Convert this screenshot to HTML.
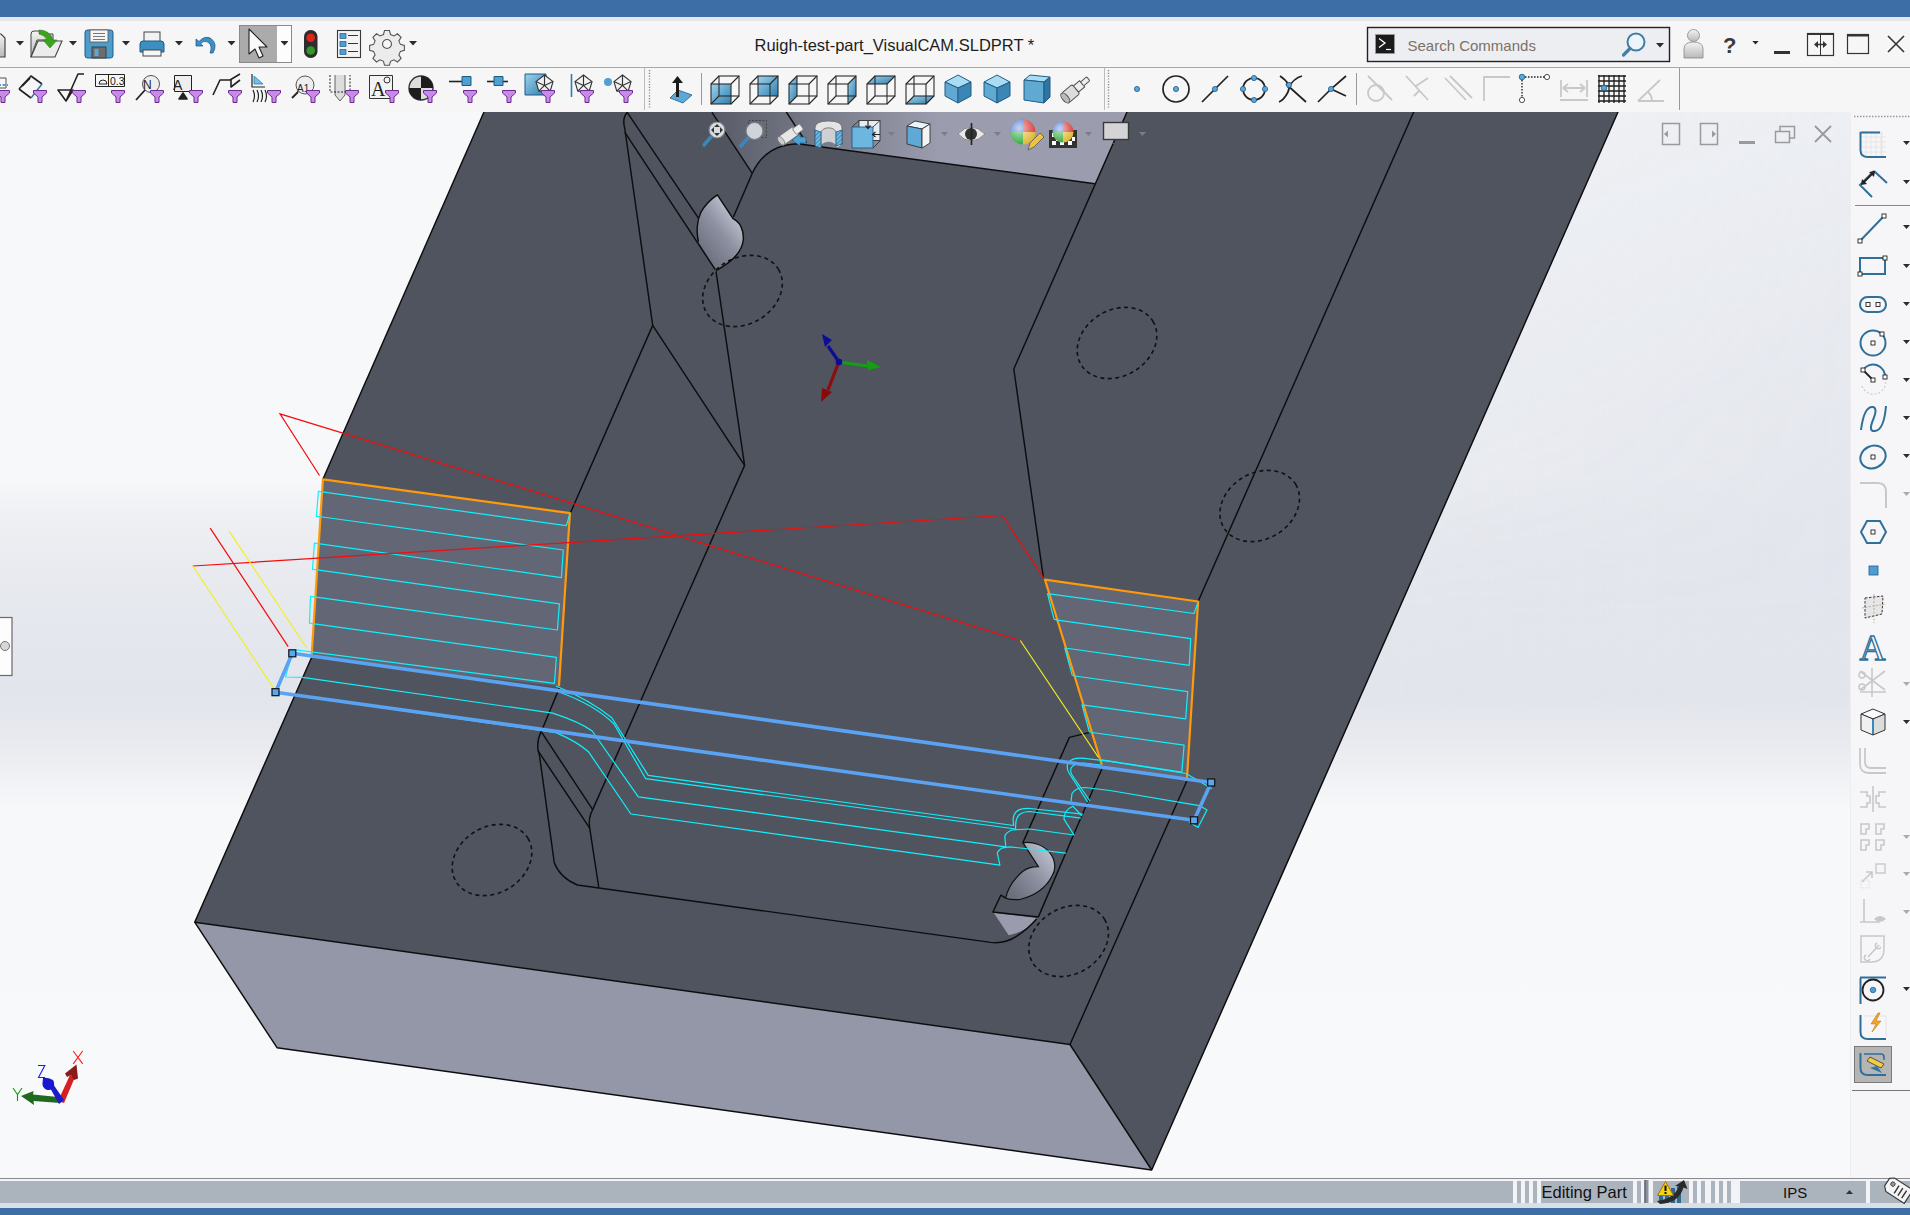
<!DOCTYPE html>
<html><head><meta charset="utf-8">
<style>
html,body{margin:0;padding:0;width:1910px;height:1215px;overflow:hidden;background:#f4f5f7;font-family:"Liberation Sans",sans-serif;}
#title{position:absolute;left:0;top:0;width:1910px;height:17px;background:#3d6ea6;}
#tb{position:absolute;left:0;top:17px;width:1910px;height:95px;background:#f6f6f7;}
#tbstrip{position:absolute;left:0;top:17px;width:1910px;height:4px;background:#e4e7ed;}
#sep1{position:absolute;left:0;top:67px;width:1910px;height:1px;background:#a9a9ab;}
#vp{position:absolute;left:0;top:112px;width:1850px;height:1066px;overflow:hidden;
 background:linear-gradient(180deg,#f7f8fa 0px,#f7f8fa 365px,#eef0f3 405px,#e9ebf0 450px,#e4e7ed 520px,#e2e5ec 580px,#e7e9ee 625px,#f0f1f4 665px,#f7f8fa 695px,#f8f9fa 1066px);}
#vp2{position:absolute;left:1000px;top:112px;width:850px;height:600px;
 background:linear-gradient(90deg,rgba(226,229,236,0) 0%,rgba(226,229,236,0.75) 55%,rgba(226,229,236,1) 100%);
 -webkit-mask-image:linear-gradient(180deg,rgba(0,0,0,0.5) 0%,rgba(0,0,0,0.85) 50%,rgba(0,0,0,1) 85%,rgba(0,0,0,0) 100%);}
#tp{position:absolute;left:1850px;top:112px;width:60px;height:1066px;background:#f6f6f8;border-left:1px solid #eeeef1;box-sizing:border-box;}
#sbline{position:absolute;left:0;top:1178px;width:1910px;height:1px;background:#8c8c8e;}
#sb{position:absolute;left:0;top:1179px;width:1910px;height:29px;background:#f1f3f6;}
#bot{position:absolute;left:0;top:1208px;width:1910px;height:7px;background:#3d6ea6;}
svg{position:absolute;left:0;top:0;}
.t{position:absolute;white-space:nowrap;color:#1a1a1a;}
</style></head><body>
<div id="title"></div>
<div id="tb"></div>
<div id="tbstrip"></div>
<div id="sep1"></div>
<div id="vp"></div><div id="vp2"></div>
<div id="tp"></div>
<div id="sbline"></div>
<div id="sb"></div>
<div id="bot"></div>

<!-- MODEL -->
<svg width="1910" height="1215" viewBox="0 0 1910 1215" style="clip-path:inset(112px 60px 37px 0)">
<defs>
<linearGradient id="wall" x1="712" y1="0" x2="940" y2="0" gradientUnits="userSpaceOnUse">
<stop offset="0" stop-color="#585b67"/><stop offset="1" stop-color="#9b9dae"/></linearGradient>
<linearGradient id="tear1" x1="700" y1="252" x2="738" y2="222" gradientUnits="userSpaceOnUse"><stop offset="0" stop-color="#6c6f7d"/><stop offset="0.6" stop-color="#8e91a1"/><stop offset="1" stop-color="#b6b9c7"/></linearGradient>
<linearGradient id="tear2" x1="1012" y1="893" x2="1052" y2="858" gradientUnits="userSpaceOnUse"><stop offset="0" stop-color="#6c6f7d"/><stop offset="0.55" stop-color="#8e91a1"/><stop offset="1" stop-color="#b6b9c7"/></linearGradient>
<linearGradient id="tear" x1="0" y1="0" x2="1" y2="0.3">
<stop offset="0" stop-color="#7a7d8c"/><stop offset="0.6" stop-color="#a5a7b6"/><stop offset="1" stop-color="#6d707e"/></linearGradient>
</defs>
<!-- body top -->
<polygon points="484,112 1618,112 1151.7,1170 1070,1044.5 194.7,922.2 311.5,657.7 322.9,479.3" fill="#50545f"/>
<!-- front face -->
<polygon points="194.7,922.2 1070,1044.5 1151.7,1170 277,1047.7" fill="#9497a8"/>
<!-- far wall -->
<path d="M712,112 L752.3,173.3 Q765,145 797.6,143.7 L1094.9,183.7 L1127,112 Z" fill="url(#wall)"/>
<!-- selected faces -->
<polygon points="322.9,479.3 569.9,513.1 559,686 311.5,657.7" fill="#636675"/>
<polygon points="1045,579.7 1198.1,601.5 1186.8,781 1101.8,764.7" fill="#636675"/>
<!-- teardrop top -->
<path d="M717.4,194.8 L733,218.7 C740,222 744,230 743.3,240 C742,252 732,262 716.2,270.5 L698.5,241.7 C696,232 697,220 701,212 C705,205 711,199 717.4,194.8 Z" fill="url(#tear1)"/>
<!-- crescent bottom right -->
<path d="M1023,842.8 C1032,841 1044,845 1050,853 C1056,861 1056,870 1052,876 C1046,888 1034,896 1020,899.5 C1014,900 1009,899.5 1005.8,898.2 C1007,890 1013,880 1022.5,871.5 C1027,868 1033,866.5 1038.4,866.6 Z" fill="url(#tear2)" stroke="#111" stroke-width="1.2"/>
<path d="M993.9,913 L1036.4,918 C1032,925 1024,932 1008.7,935.2 Z" fill="#9a9cad"/>
<g fill="none" stroke="#0d0d0f" stroke-width="1.45" stroke-linejoin="round">
<polyline points="484,112 322.9,479.3"/>
<polyline points="311.5,657.7 194.7,922.2 277,1047.7 1151.7,1170 1618,112"/>
<polyline points="194.7,922.2 1070,1044.5 1186.8,781"/>
<polyline points="1151.7,1170 1070,1044.5"/>
<!-- left channel -->
<path d="M627.2,112.4 Q622,118 624.7,128 L652.7,325.4 L570,513.8"/>
<polyline points="627.2,112.4 698.8,218.6"/>
<polyline points="624.7,132.2 715.3,269.7"/>
<polyline points="712,112.4 752.3,173.3"/>
<polyline points="786.3,112 806.4,142.7"/>
<path d="M752.3,173.3 Q765,145 797.6,143.7 L1094.9,183.7"/>
<polyline points="752.3,173.3 733.4,217"/>
<polyline points="716,271.3 744.6,465.4 592.7,809.6"/>
<polyline points="652.7,325.4 744.6,465.4"/>
<path d="M559.3,688.1 L541.2,731.7 Q537,740 537.9,749 L539.5,755.6 L554.3,862.8 Q560,878 577.4,885 L990.7,942.4 Q1005,944 1016.4,936.4 Q1028,929 1036.5,919"/>
<polyline points="541.2,731.7 592.7,809.6"/>
<polyline points="537.9,750.7 589.7,828.1"/>
<path d="M592.7,809.6 Q588,818 589.7,828.1 L598.8,887.5"/>
<!-- teardrop outline -->
<path d="M716.2,270.5 C732,262 742,252 743.3,240 C744,230 740,222 733,218.7 L717.4,194.8 C711,199 705,205 701,212 C697,220 696,232 698.5,241.7"/>
<!-- right side -->
<polyline points="1127,112 1013.8,369 1043.4,577.9"/>
<polyline points="1413.7,112 1198.1,601.5"/>
<polyline points="1101.8,769 1038.4,916.9"/>
<polyline points="1089.8,732.4 1069.4,737.4 1022.8,842.9"/>
<path d="M1005.8,898.2 L1000.8,895.2 L992.9,912 L1038.4,917"/>
</g>
<!-- dotted ellipses -->
<g fill="none" stroke="#111" stroke-width="1.6" stroke-dasharray="4 3.5">
<ellipse cx="742.5" cy="291" rx="42" ry="33" transform="rotate(-31 742.5 291)"/>
<ellipse cx="1117" cy="343" rx="42" ry="33" transform="rotate(-31 1117 343)"/>
<ellipse cx="1259.7" cy="506" rx="42" ry="33" transform="rotate(-31 1259.7 506)"/>
<ellipse cx="492" cy="860" rx="42" ry="33" transform="rotate(-31 492 860)"/>
<ellipse cx="1068.6" cy="941" rx="42" ry="33" transform="rotate(-31 1068.6 941)"/>
</g>
<!-- orange outlines -->
<g fill="none" stroke="#ff9a0a" stroke-width="2.2" stroke-linejoin="round">
<polyline points="311.5,657.7 322.9,479.3 569.9,513.1 559,686"/>
<polyline points="1101.8,764.7 1045,579.7 1198.1,601.5 1186.8,781"/>
</g>
<!-- cyan toolpaths -->
<g fill="none" stroke="#10f0fc" stroke-width="1.2" stroke-linejoin="round">
<polyline points="569.9,513.9 566.3,525.7 318.4,491.3 316.4,516.4 322.3,517 563.3,550 561.4,577.7 314.4,543.1 312.5,569.4 317.4,569.8 559.4,603.9 557.4,630 310.5,596.4 309.5,623.1 312.5,623.7 556.4,657.3 554.4,683.3 295.7,649.8"/>
<polyline points="1198,602.5 1194,613.5 1047.5,593.7 1054,619.2 1057.4,620.1 1190.7,638.7 1189.3,665.3 1064.8,648 1072.2,675.2 1074.6,676 1187.7,691.7 1185.7,718.8 1082,704.8 1089.4,732 1091.9,732.5 1184.1,745.2 1181.8,772.2 1101.2,759.8"/>
<path d="M556,686 Q590,700 612,718 L648.2,775.4 L1013.7,825.5 Q1012,816 1016,812 Q1020,808 1030,808.5 L1082.8,814.2"/>
<path d="M559,692 Q595,705 614,724 L645.7,778.7 L1015.7,829 Q1015,819 1019,815 Q1023,811.5 1030,811.5 L1080.9,818.1"/>
<path d="M291,657.6 L285.4,677 L302.6,677.4 L552.7,713.1 Q580,722 592.2,731 L638.3,796.8 L1005.8,846.8 L1004.8,836.9 Q1005,833 1011.7,830 L1029.5,829 L1074,835 L1064,819.1 Q1064,810 1073,806.3 L1082,816"/>
<path d="M285.8,694 L556,732.6 Q578,742 588.9,752.3 L630.9,814 L999.9,865.1 L997.4,853.7 Q997,851 1002.8,847.8 L1009.8,846.8 L1066,853.2"/>
<path d="M1110,761.4 L1084.8,758.4 Q1072,757 1068,763 Q1066,768 1069,773 L1087.8,802.3"/>
<path d="M1101,765 L1084,763 Q1074,763 1071,768 Q1070,772 1072,775 L1090,801"/>
<path d="M1110,790.5 L1084.8,787.5 Q1076,787.5 1072,793.5 L1071,801.4"/>
<path d="M1212.1,788.7 L1186,773.5 L1110,761.4 M1199.2,805.6 L1110,790.5"/>
<path d="M1199.2,805.6 L1207,810 L1198,827.5 L1189,822"/>
</g>
<!-- red / yellow -->
<g fill="none" stroke-width="1.2">
<polyline points="319.5,475.5 280,413.9 1020.3,640.5" stroke="#f40c0c"/>
<polyline points="192.8,566 1002.5,515.5 1043.7,578.2" stroke="#f40c0c"/>
<polyline points="210.2,528.1 288.2,646.6" stroke="#f40c0c"/>
<polyline points="192.8,566 273.4,687.8" stroke="#f0f020"/>
<polyline points="229,530.8 306.7,648" stroke="#f0f020"/>
<polyline points="1020.3,640.5 1098.5,757.5" stroke="#f0f020"/>
</g>
<!-- blue sketch -->
<g fill="none" stroke="#5aa2f2" stroke-width="3.6" stroke-linejoin="round">
<polygon points="292.3,653.3 1211.2,782.5 1194,820.3 275.5,692.2"/>
</g>
<g fill="#5aa8f0" stroke="#111" stroke-width="1.2">
<rect x="288.8" y="649.8" width="7" height="7"/>
<rect x="272" y="688.7" width="7" height="7"/>
<rect x="1207.7" y="779" width="7" height="7"/>
<rect x="1190.5" y="816.8" width="7" height="7"/>
</g>
<!-- triad center -->
<g stroke-width="3.2" stroke-linecap="butt">
<line x1="839" y1="362" x2="828" y2="346" stroke="#0c0c98"/>
<line x1="839" y1="362" x2="868" y2="366" stroke="#12a012"/>
<line x1="838" y1="364" x2="828" y2="390" stroke="#8e0c0c"/>
</g>
<polygon points="822,334 832,340 825,347" fill="#0c0c98"/>
<polygon points="881,367 867,360 868,370" fill="#12a012"/>
<polygon points="821,402 822,388 832,392" fill="#8a0a0a"/>
<circle cx="839" cy="362" r="3.3" fill="#0c0c98"/>
</svg>


<!-- UI ICONS -->
<svg width="1910" height="1215" viewBox="0 0 1910 1215">
<defs>
<linearGradient id="blueg" x1="0" y1="0" x2="1" y2="1"><stop offset="0" stop-color="#9fd3ef"/><stop offset="1" stop-color="#2f7fae"/></linearGradient>
<linearGradient id="greyg" x1="0" y1="0" x2="0" y2="1"><stop offset="0" stop-color="#f4f4f4"/><stop offset="1" stop-color="#b8b8b8"/></linearGradient>
<radialGradient id="ballg" cx="0.35" cy="0.35" r="0.7"><stop offset="0" stop-color="#fff" stop-opacity="0.7"/><stop offset="1" stop-color="#fff" stop-opacity="0"/></radialGradient>
<symbol id="dd" viewBox="0 0 8 5"><polygon points="0,0 8,0 4,4.5" fill="#2b2b2b"/></symbol><symbol id="ddg" viewBox="0 0 8 5"><polygon points="0,0 8,0 4,4.5" fill="#aaa"/></symbol>
<symbol id="fun" viewBox="0 0 14 13"><path d="M0.5,0.5 H13.5 V3 L9,7 V12.5 H5 V7 L0.5,3 Z" fill="#c78ae6" stroke="#6b2a90" stroke-width="1"/></symbol>
<symbol id="mesh" viewBox="0 0 20 20"><g fill="#f2f2f2" stroke="#333" stroke-width="1.2" stroke-linejoin="round"><polygon points="10,1 19,8 16,18 4,18 1,8"/><polyline points="1,8 10,12 19,8" fill="none"/><polyline points="10,1 10,12 4,18" fill="none"/><polyline points="10,12 16,18" fill="none"/></g></symbol>
</defs>

<!-- row1 -->
<path d="M-8,34 H1 L5,38 V57 H-8Z" fill="url(#greyg)" stroke="#444" stroke-width="1.2"/>
<use href="#dd" x="16" y="41" width="8" height="5"/>
<g>
<path d="M31,57 V34 Q31,31 34,31 H41 L44,34 H53 V40 H37 Z" fill="url(#greyg)" stroke="#444" stroke-width="1"/>
<path d="M31,57 L38,41 H62 L55,57 Z" fill="#ececec" stroke="#444" stroke-width="1.1"/>
<path d="M39,30 Q50,30 53,40 L57,40 L50,48 L43,40 L47,40 Q45,35 39,34 Z" fill="#3da21e" stroke="#2b7a12" stroke-width="0.6"/>
</g>
<use href="#dd" x="69" y="41" width="8" height="5"/>
<g>
<rect x="85" y="30" width="28" height="28" rx="2.5" fill="#4f9bc9" stroke="#1f5c85" stroke-width="1"/>
<rect x="90" y="30" width="18" height="12" fill="#f5f5f5" stroke="#555" stroke-width="0.8"/>
<line x1="93" y1="33.5" x2="105" y2="33.5" stroke="#777"/><line x1="93" y1="36.5" x2="105" y2="36.5" stroke="#777"/><line x1="93" y1="39.5" x2="105" y2="39.5" stroke="#777"/>
<rect x="92" y="47" width="14" height="11" fill="#6d6d6d" stroke="#333" stroke-width="0.8"/>
<rect x="94.5" y="49" width="4" height="7" fill="#5aa9d6"/>
</g>
<use href="#dd" x="122" y="41" width="8" height="5"/>
<g>
<rect x="144" y="32" width="16" height="12" fill="#f2f2f2" stroke="#444" stroke-width="1"/>
<path d="M140,44 Q140,41 143,41 H161 Q164,41 164,44 V52 H140Z" fill="#3d8fc2" stroke="#1f5c85" stroke-width="1"/>
<rect x="143" y="50" width="18" height="6" fill="#f6f6f6" stroke="#444" stroke-width="1"/>
</g>
<use href="#dd" x="175" y="41" width="8" height="5"/>
<path d="M196,39 L196,46 L203,46 L200.5,43.5 Q204,40 208,42 Q213,46 210,53 L213,53 Q218,44 211,38.5 Q205,35 199,41.5 Z" fill="#3e8ec4" stroke="#1f5f8a" stroke-width="0.8"/>
<use href="#dd" x="227.5" y="41" width="8" height="5"/>
<rect x="239.5" y="25.5" width="52" height="37" fill="#fdfdfd" stroke="#8a8a8a" stroke-width="1"/>
<rect x="240" y="26" width="37" height="36" fill="#ababab"/>
<path d="M249,29 L267,47 L259,47 L263,56 L259,58 L255,49 L249,54 Z" fill="#fafafa" stroke="#222" stroke-width="1.1" stroke-linejoin="round"/>
<use href="#dd" x="280.5" y="41" width="8" height="5"/>
<rect x="304" y="30" width="13.5" height="28" rx="6.5" fill="#2d2d2d"/>
<circle cx="310.7" cy="37.8" r="4.3" fill="#e0261a"/><circle cx="310.7" cy="50.5" r="4.3" fill="#2f9a2a"/>
<g>
<rect x="337.5" y="30.5" width="23" height="27" fill="#f4f4f4" stroke="#3a3a3a" stroke-width="1.1"/>
<rect x="340" y="33.5" width="6" height="5" fill="#4d9fd2" stroke="#1f5c85" stroke-width="0.7"/>
<rect x="340" y="41.5" width="6" height="5" fill="#4d9fd2" stroke="#1f5c85" stroke-width="0.7"/>
<rect x="340" y="49.5" width="6" height="5" fill="#4d9fd2" stroke="#1f5c85" stroke-width="0.7"/>
<line x1="348" y1="35.5" x2="358" y2="35.5" stroke="#333" stroke-width="1"/><line x1="348" y1="43.5" x2="358" y2="43.5" stroke="#333" stroke-width="1"/><line x1="348" y1="51.5" x2="358" y2="51.5" stroke="#333" stroke-width="1"/>
</g>
<g transform="translate(387,44)">
<path d="M-2.5,-13.5 h5 l1,4 l3.5,1.5 l3.5,-2.2 l3.6,3.6 l-2.2,3.5 l1.5,3.5 l4,1 v5 l-4,1 l-1.5,3.5 l2.2,3.5 l-3.6,3.6 l-3.5,-2.2 l-3.5,1.5 l-1,4 h-5 l-1,-4 l-3.5,-1.5 l-3.5,2.2 l-3.6,-3.6 l2.2,-3.5 l-1.5,-3.5 l-4,-1 v-5 l4,-1 l1.5,-3.5 l-2.2,-3.5 l3.6,-3.6 l3.5,2.2 l3.5,-1.5 z" fill="#ececec" stroke="#555" stroke-width="1.1"/>
<circle r="4.5" fill="#f7f7f7" stroke="#555" stroke-width="1.1"/>
</g>
<use href="#dd" x="409" y="41" width="8" height="5"/>

<!-- title -->
<text x="754.5" y="51" font-family="Liberation Sans" font-size="16.5" fill="#1d1d1d">Ruigh-test-part_VisualCAM.SLDPRT *</text>

<!-- search -->
<rect x="1367.5" y="27.5" width="302" height="34" fill="#edeef2" stroke="#222" stroke-width="1.4"/>
<rect x="1375.5" y="34.5" width="19" height="19" fill="#1b1b1b" stroke="#999" stroke-width="0.8"/>
<polyline points="1379,38.5 1385,43 1379,47.5" fill="none" stroke="#fff" stroke-width="1.3"/><line x1="1386" y1="49.5" x2="1391" y2="49.5" stroke="#fff" stroke-width="1.2"/>
<text x="1407.5" y="51" font-family="Liberation Sans" font-size="15" fill="#7c7168">Search Commands</text>
<circle cx="1636" cy="42" r="8.5" fill="#eef5fa" stroke="#3f7fa8" stroke-width="2"/>
<line x1="1630" y1="48.5" x2="1623.5" y2="55" stroke="#3f7fa8" stroke-width="3.2" stroke-linecap="round"/>
<use href="#dd" x="1656" y="43" width="8" height="5"/>
<!-- user/help/window -->
<circle cx="1693.5" cy="35.5" r="6" fill="url(#greyg)" stroke="#888" stroke-width="0.8"/>
<path d="M1684,58 V49 Q1684,42 1693.5,42 Q1703,42 1703,49 V58 Z" fill="url(#greyg)" stroke="#888" stroke-width="0.8"/>
<text x="1723" y="53" font-family="Liberation Sans" font-weight="bold" font-size="22" fill="#3a3a3a">?</text>
<use href="#dd" x="1752" y="41" width="7" height="4"/>
<rect x="1774" y="51" width="16" height="3" fill="#333"/>
<rect x="1807.5" y="33.5" width="26" height="22" fill="none" stroke="#333" stroke-width="1.2"/>
<rect x="1807" y="33" width="27" height="2" fill="#333"/>
<line x1="1820.5" y1="34" x2="1820.5" y2="56" stroke="#333" stroke-width="1"/>
<path d="M1814,44.5 L1818,41 V48 Z M1827,44.5 L1823,41 V48 Z" fill="#333"/><line x1="1816" y1="44.5" x2="1825" y2="44.5" stroke="#333" stroke-width="1.5"/>
<rect x="1847.5" y="34.5" width="21" height="19" fill="none" stroke="#333" stroke-width="1.2"/>
<rect x="1847" y="34" width="22" height="2.5" fill="#333"/>
<path d="M1888,36 L1904,52 M1904,36 L1888,52" stroke="#333" stroke-width="1.6"/>


<g fill="none" stroke="#222" stroke-width="1.6" stroke-linejoin="round">
<path d="M-3,78 H6 V88 H-3" stroke="#555" stroke-width="1"/><line x1="-2" y1="85" x2="8" y2="85" stroke="#2e7fb0" stroke-dasharray="3 1.5" stroke-width="1.4"/>
<path d="M19,89 L31,76 L42,84"/><path d="M31,98 L19,89" /><line x1="31" y1="98" x2="42" y2="84" stroke="#2e7fb0" stroke-width="1.6"/>
<line x1="22" y1="86" x2="30" y2="78" stroke-width="1.8"/>
<path d="M58,90 H73 L66,101 Z M66,101 L78,74 H84"/>
<rect x="95.5" y="74.5" width="29" height="12" stroke-width="1"/><line x1="108.5" y1="74.5" x2="108.5" y2="86.5" stroke-width="1"/>
<path d="M99,84 A4,4 0 0 1 107,84 Z" stroke-width="1"/>
<circle cx="151" cy="84" r="8.5" fill="#eee" stroke="#555" stroke-width="1"/><line x1="145" y1="90" x2="136" y2="100" stroke-width="1.8"/>
<rect x="174.5" y="75.5" width="17" height="16" fill="#eee" stroke-width="1"/><path d="M179,99 L183,93 L187,99 Z" fill="#222"/>
<path d="M213,95 L220,80 H230 L240,74 M231,80 V87 L240,80"/>
<path d="M252,74 V87 H265" stroke-width="1.2"/><path d="M254,84 L254,76 L263,84Z" fill="#6fc0e6" stroke="#2e7fb0" stroke-width="0.8"/>
<path d="M253,90 Q256,96 253,102 M257,90 Q260,96 257,102 M261,90 Q264,96 261,102 M265,90 Q268,96 265,102" stroke-width="1.2"/>
<circle cx="305" cy="85" r="9" fill="#eee" stroke="#555" stroke-width="1"/><line x1="298" y1="92" x2="292" y2="98" stroke-width="1.8"/>
<path d="M335,75 V95 L340,101 L345,95 V75" fill="#ddd" stroke="#666" stroke-width="1"/><path d="M330,75 V92 H350 V75" stroke-dasharray="2 1.5" stroke-width="1"/>
<rect x="369.5" y="75.5" width="23" height="23" fill="#f3f3f3" stroke="#333" stroke-width="1"/>
<circle cx="421" cy="88" r="12" fill="#ddd" stroke="#333" stroke-width="1.4"/>
<path d="M421,76 A12,12 0 0 1 433,88 H421 Z M421,100 A12,12 0 0 1 409,88 H421 Z" fill="#1d1d1d" stroke="none"/>
<line x1="449" y1="81.5" x2="462" y2="81.5"/><rect x="462" y="76.5" width="9" height="9" fill="#4f9fd0" stroke="#1f5c85" stroke-width="1"/>
<line x1="487" y1="81.5" x2="508" y2="81.5"/><rect x="494" y="76.5" width="9" height="9" fill="#4f9fd0" stroke="#1f5c85" stroke-width="1"/>
<rect x="525" y="74" width="21" height="21" fill="url(#blueg)" stroke="#1f5c85" stroke-width="1"/>
<line x1="571.5" y1="74" x2="571.5" y2="97" stroke="#2e7fb0" stroke-width="1.6"/>
<circle cx="608" cy="82" r="4" fill="#4f9fd0" stroke="none"/>
</g>
<text x="173" y="90" font-family="Liberation Sans" font-size="14" fill="#222">A</text>
<text x="143" y="89" font-family="Liberation Sans" font-size="12" fill="#222">N</text>
<text x="110" y="85" font-family="Liberation Sans" font-size="10.5" fill="#222">0.3</text>
<text x="297" y="92" font-family="Liberation Sans" font-size="10" fill="#222">A1</text>
<text x="371" y="96" font-family="Liberation Serif" font-size="20" fill="#222">A</text><circle cx="387" cy="80" r="3" fill="none" stroke="#333"/>
<use href="#mesh" x="535" y="74" width="19" height="19"/>
<use href="#mesh" x="574" y="74" width="19" height="19"/>
<use href="#mesh" x="613" y="74" width="19" height="19"/>
<!-- row2 funnels -->
<g>
<use href="#fun" x="-4" y="90" width="14" height="13"/>
<use href="#fun" x="33" y="90" width="14" height="13"/>
<use href="#fun" x="72" y="90" width="14" height="13"/>
<use href="#fun" x="111" y="90" width="14" height="13"/>
<use href="#fun" x="150" y="90" width="14" height="13"/>
<use href="#fun" x="189" y="90" width="14" height="13"/>
<use href="#fun" x="228" y="90" width="14" height="13"/>
<use href="#fun" x="267" y="90" width="14" height="13"/>
<use href="#fun" x="306" y="90" width="14" height="13"/>
<use href="#fun" x="345" y="90" width="14" height="13"/>
<use href="#fun" x="385" y="90" width="14" height="13"/>
<use href="#fun" x="423" y="90" width="14" height="13"/>
<use href="#fun" x="463" y="90" width="14" height="13"/>
<use href="#fun" x="502" y="90" width="14" height="13"/>
<use href="#fun" x="541" y="90" width="14" height="13"/>
<use href="#fun" x="580" y="90" width="14" height="13"/>
<use href="#fun" x="619" y="90" width="14" height="13"/>
</g>
<line x1="644.5" y1="68" x2="644.5" y2="110" stroke="#bbb" stroke-width="1"/>
<line x1="649.5" y1="70" x2="649.5" y2="108" stroke="#888" stroke-width="1.4" stroke-dasharray="1.2 1.6"/>

<path d="M670,98 L678,90 L692,95 L683,103 Z" fill="#5aa8d8" stroke="#1f5c85" stroke-width="0.8"/><line x1="677.5" y1="97" x2="677.5" y2="81" stroke="#1b1b1b" stroke-width="3"/><polygon points="672,83 677.5,76 683,83" fill="#1b1b1b"/>
<line x1="701.5" y1="73" x2="701.5" y2="105" stroke="#999" stroke-width="1"/>
<polygon points="711,84 731,84 731,104 711,104" fill="url(#blueg)"/>
<g fill="none" stroke="#2a2a2a" stroke-width="1.1"><rect x="711" y="84" width="20" height="20"/><rect x="719" y="76" width="20" height="20"/><path d="M711,84 L719,76 M731,84 L739,76 M711,104 L719,96 M731,104 L739,96"/></g>
<polygon points="758,76 778,76 778,96 758,96" fill="url(#blueg)"/>
<g fill="none" stroke="#2a2a2a" stroke-width="1.1"><rect x="750" y="84" width="20" height="20"/><rect x="758" y="76" width="20" height="20"/><path d="M750,84 L758,76 M770,84 L778,76 M750,104 L758,96 M770,104 L778,96"/></g>
<polygon points="789,84 797,76 797,96 789,104" fill="url(#blueg)"/>
<g fill="none" stroke="#2a2a2a" stroke-width="1.1"><rect x="789" y="84" width="20" height="20"/><rect x="797" y="76" width="20" height="20"/><path d="M789,84 L797,76 M809,84 L817,76 M789,104 L797,96 M809,104 L817,96"/></g>
<polygon points="848,84 856,76 856,96 848,104" fill="url(#blueg)"/>
<g fill="none" stroke="#2a2a2a" stroke-width="1.1"><rect x="828" y="84" width="20" height="20"/><rect x="836" y="76" width="20" height="20"/><path d="M828,84 L836,76 M848,84 L856,76 M828,104 L836,96 M848,104 L856,96"/></g>
<polygon points="867,84 875,76 895,76 887,84" fill="url(#blueg)"/>
<g fill="none" stroke="#2a2a2a" stroke-width="1.1"><rect x="867" y="84" width="20" height="20"/><rect x="875" y="76" width="20" height="20"/><path d="M867,84 L875,76 M887,84 L895,76 M867,104 L875,96 M887,104 L895,96"/></g>
<polygon points="906,104 914,96 934,96 926,104" fill="url(#blueg)"/>
<g fill="none" stroke="#2a2a2a" stroke-width="1.1"><rect x="906" y="84" width="20" height="20"/><rect x="914" y="76" width="20" height="20"/><path d="M906,84 L914,76 M926,84 L934,76 M906,104 L914,96 M926,104 L934,96"/></g>
<g stroke="#1f5c85" stroke-width="1" stroke-linejoin="round"><polygon points="945,82 958,75 971,82 958,88" fill="#a9dcf3"/><polygon points="945,82 958,88 958,103 945,96" fill="#5fa9d3"/><polygon points="958,88 971,82 971,96 958,103" fill="#3c86b6"/></g>
<g stroke="#1f5c85" stroke-width="1" stroke-linejoin="round"><polygon points="984,82 997,75 1010,82 997,88" fill="#a9dcf3"/><polygon points="984,82 997,88 997,103 984,96" fill="#5fa9d3"/><polygon points="997,88 1010,82 1010,96 997,103" fill="#3c86b6"/></g>
<g stroke="#1f5c85" stroke-width="1" stroke-linejoin="round"><polygon points="1024,80 1030,75 1050,77 1044,82" fill="#a9dcf3"/><polygon points="1024,80 1044,82 1044,103 1024,100" fill="#5fa9d3"/><polygon points="1044,82 1050,77 1050,97 1044,103" fill="#2f74a3"/></g>
<g transform="translate(1076,89) rotate(-40)"><rect x="-14" y="-6" width="14" height="12" rx="2" fill="#ddd" stroke="#555" stroke-width="1"/><rect x="0" y="-4" width="8" height="8" fill="#eee" stroke="#555" stroke-width="1"/><rect x="8" y="-2.5" width="8" height="5" rx="1" fill="#eee" stroke="#555" stroke-width="1"/><ellipse cx="-14" cy="0" rx="3" ry="6" fill="#bbb" stroke="#555"/></g>
<line x1="1108.5" y1="70" x2="1108.5" y2="108" stroke="#888" stroke-width="1.4" stroke-dasharray="1.2 1.6"/><line x1="1104.5" y1="68" x2="1104.5" y2="110" stroke="#bbb" stroke-width="1"/>
<circle cx="1137" cy="89" r="2.6" fill="#5aa8d8" stroke="#1f5c85" stroke-width="0.8"/>
<circle cx="1176" cy="89" r="13" fill="none" stroke="#222" stroke-width="1.7"/><circle cx="1176" cy="89" r="2.6" fill="#5aa8d8" stroke="#1f5c85" stroke-width="0.8"/>
<line x1="1202" y1="102" x2="1228" y2="76" stroke="#222" stroke-width="1.7"/><circle cx="1215" cy="89" r="2.6" fill="#5aa8d8" stroke="#1f5c85" stroke-width="0.8"/>
<circle cx="1254" cy="89" r="11" fill="none" stroke="#222" stroke-width="1.7"/><circle cx="1254" cy="78" r="2.6" fill="#5aa8d8" stroke="#1f5c85" stroke-width="0.8"/><circle cx="1254" cy="100" r="2.6" fill="#5aa8d8" stroke="#1f5c85" stroke-width="0.8"/><circle cx="1243" cy="89" r="2.6" fill="#5aa8d8" stroke="#1f5c85" stroke-width="0.8"/><circle cx="1265" cy="89" r="2.6" fill="#5aa8d8" stroke="#1f5c85" stroke-width="0.8"/>
<path d="M1280,76 Q1292,84 1288,92 Q1284,100 1279,102 M1286,84 L1306,102 M1288,88 Q1294,78 1302,76" fill="none" stroke="#222" stroke-width="1.7"/><circle cx="1289" cy="85" r="2.6" fill="#5aa8d8" stroke="#1f5c85" stroke-width="0.8"/>
<path d="M1318,102 L1331,89 L1346,76 M1331,89 L1346,96" fill="none" stroke="#222" stroke-width="1.7"/><circle cx="1331" cy="89" r="2.6" fill="#5aa8d8" stroke="#1f5c85" stroke-width="0.8"/>
<line x1="1356.5" y1="73" x2="1356.5" y2="105" stroke="#999" stroke-width="1"/>
<circle cx="1376" cy="93" r="8" fill="none" stroke="#c8c8c8" stroke-width="1.8"/><path d="M1368,76 L1392,100" fill="none" stroke="#c8c8c8" stroke-width="1.8"/>
<path d="M1406,76 L1428,100 M1416,86 L1428,78 M1420,90 L1414,96" fill="none" stroke="#c8c8c8" stroke-width="1.8"/>
<path d="M1445,78 L1466,100 M1450,76 L1472,98" fill="none" stroke="#c8c8c8" stroke-width="1.8"/>
<path d="M1484,101 V77 H1510" fill="none" stroke="#c8c8c8" stroke-width="1.8"/>
<path d="M1522,77 H1545 M1522,77 V100" fill="none" stroke="#222" stroke-width="1.4" stroke-dasharray="1.5 1.5"/><circle cx="1522" cy="77" r="2.8" fill="#5aa8d8" stroke="#1f5c85" stroke-width="0.8"/><circle cx="1547" cy="77" r="2.6" fill="#fff" stroke="#222" stroke-width="0.8"/><circle cx="1522" cy="100" r="2.6" fill="#fff" stroke="#222" stroke-width="0.8"/>
<path d="M1561,80 V97 M1587,80 V97 M1560,100 H1588 M1563,88 H1585 M1563,88 L1568,84 M1563,88 L1568,92 M1585,88 L1580,84 M1585,88 L1580,92" fill="none" stroke="#c8c8c8" stroke-width="1.8"/>
<g stroke="#1d1d1d" stroke-width="1.3"><path d="M1599,75 V103 M1604,75 V103 M1609,75 V103 M1614,75 V103 M1619,75 V103 M1624,75 V103 M1598,76 H1626 M1598,81 H1626 M1598,86 H1626 M1598,91 H1626 M1598,96 H1626 M1598,101 H1626"/></g><circle cx="1604" cy="88" r="2.8" fill="#5aa8d8" stroke="#1f5c85" stroke-width="0.8"/>
<path d="M1638,101 H1664 M1638,101 L1660,80" fill="none" stroke="#c8c8c8" stroke-width="1.8"/><path d="M1652,101 A12,12 0 0 0 1648,92" fill="none" stroke="#c8c8c8" stroke-width="1.8"/>
<line x1="1679.5" y1="68" x2="1679.5" y2="110" stroke="#999" stroke-width="1"/>
<circle cx="717" cy="130" r="8" fill="#d8dbe0" stroke="#7a7d86" stroke-width="1.2"/><path d="M717,124 L714,127 H720Z M717,136 L714,133 H720Z M711,130 L714,127 V133Z M723,130 L720,127 V133Z" fill="#333"/><line x1="711" y1="137" x2="704" y2="145" stroke="#3f86b8" stroke-width="3.5" stroke-linecap="round"/>
<rect x="748.5" y="120.5" width="18" height="17" fill="none" stroke="#444" stroke-width="1" stroke-dasharray="2 1.5"/><circle cx="754.5" cy="131" r="8.5" fill="#cfd3da" stroke="#7a7d86" stroke-width="1.2"/><line x1="748" y1="138" x2="741" y2="146" stroke="#3f86b8" stroke-width="3.5" stroke-linecap="round"/>
<g transform="translate(791,134) rotate(-35)"><rect x="-12" y="-5" width="18" height="10" rx="2" fill="#e6e6e6" stroke="#777" stroke-width="0.8"/><rect x="4" y="-3.5" width="9" height="7" rx="1.5" fill="#eee" stroke="#777" stroke-width="0.8"/><ellipse cx="-12" cy="0" rx="2.5" ry="5" fill="#ccc" stroke="#777" stroke-width="0.8"/></g><path d="M792,140 L800,134 V137 H806 V143 H800 V146Z" fill="#4e9fd2" stroke="#1f5c85" stroke-width="0.6"/>
<defs><pattern id="hatch" width="3" height="3" patternUnits="userSpaceOnUse" patternTransform="rotate(45)"><rect width="3" height="3" fill="#6fb8e0"/><line x1="0" y1="0" x2="0" y2="3" stroke="#1f5c85" stroke-width="1"/></pattern></defs><path d="M815,128 Q815,121 828.5,121 Q842,121 842,128 V143 Q842,147 836,147.5 V133 Q835,128 828.5,128 Q822,128 821,133 V148 Q815,147 815,143 Z" fill="#e4e4e6" stroke="#666" stroke-width="0.8"/><path d="M821,133 Q822,128 828.5,128 Q835,128 836,133 V145 Q832,142 828.5,142 Q825,142 821,145Z" fill="#cfd0d4" stroke="#777" stroke-width="0.6"/><path d="M815,130 L821,132 V148 L815,146Z" fill="url(#hatch)" stroke="#1f5c85" stroke-width="0.8"/><path d="M836,132 L842,130 V144 L836,146Z" fill="url(#hatch)" stroke="#1f5c85" stroke-width="0.8"/><g fill="none" stroke="#333" stroke-width="0.9"><rect x="859" y="120.5" width="21" height="20" fill="#e6edf2"/><path d="M852,127 L859,120.5 M873,127 L880,120.5 M873,148 L880,141 M852,148 L859,141"/></g><rect x="852" y="127" width="21" height="21" fill="#6cb6e0" stroke="#1f5c85" stroke-width="0.9"/><path d="M868,121 V128 M865.5,125.5 L868,128.5 L870.5,125.5 M880,134.5 H873 M875.5,132 L872.5,134.5 L875.5,137" fill="none" stroke="#222" stroke-width="1.2"/><polygon points="888,132 895,132 891.5,136" fill="#7a7d88"/>
<g stroke="#333" stroke-width="0.9" stroke-linejoin="round"><polygon points="907,126 915,121 930,124 922,129" fill="#eaf4fa"/><polygon points="907,126 922,129 922,148 907,144" fill="#5ea9d6"/><polygon points="922,129 930,124 930,143 922,148" fill="#f4f4f4"/></g>
<polygon points="941,132 948,132 944.5,136" fill="#7a7d88"/>
<path d="M958,134 Q971,120 985,134 Q971,148 958,134Z" fill="#e8e8e8" stroke="#888" stroke-width="1"/><circle cx="971" cy="134" r="6" fill="#333"/><line x1="971.5" y1="123" x2="971.5" y2="145" stroke="#222" stroke-width="1.6"/>
<polygon points="994,132 1001,132 997.5,136" fill="#7a7d88"/>
<g><path d="M1023,132 V119.5 A12.5,12.5 0 0 0 1010.5,132 Z" fill="#3f6fd0"/><path d="M1023,132 V119.5 A12.5,12.5 0 0 1 1035.5,132 Z" fill="#d83838"/><path d="M1023,132 H1010.5 A12.5,12.5 0 0 0 1023,144.5 Z" fill="#2fa83a"/><path d="M1023,132 H1035.5 A12.5,12.5 0 0 1 1023,144.5 Z" fill="#e0b830"/><circle cx="1023" cy="132" r="12.5" fill="url(#ballg)"/></g>
<path d="M1028,150 L1030,143 L1040,133 L1044,137 L1034,147Z" fill="#f0c040" stroke="#555" stroke-width="0.8"/>
<rect x="1049" y="130" width="28" height="18" fill="#333"/><path d="M1052,133 h4 v4 h-4z M1060,133 h4 v4 h-4z M1068,133 h4 v4 h-4z M1056,137 h4 v4 h-4z M1064,137 h4 v4 h-4z M1072,137 h3 v4 h-3z M1052,141 h4 v4 h-4z M1060,141 h4 v4 h-4z M1068,141 h4 v4 h-4z" fill="#fff"/>
<g><path d="M1063,132 V121.5 A10.5,10.5 0 0 0 1052.5,132 Z" fill="#3f6fd0"/><path d="M1063,132 V121.5 A10.5,10.5 0 0 1 1073.5,132 Z" fill="#d83838"/><path d="M1063,132 H1052.5 A10.5,10.5 0 0 0 1063,142.5 Z" fill="#2fa83a"/><path d="M1063,132 H1073.5 A10.5,10.5 0 0 1 1063,142.5 Z" fill="#e0b830"/><circle cx="1063" cy="132" r="10.5" fill="url(#ballg)"/></g>
<polygon points="1085,132 1092,132 1088.5,136" fill="#7a7d88"/>
<rect x="1103.5" y="122.5" width="25" height="17" fill="#d4d4d6" stroke="#3a3a3a" stroke-width="1.4"/><line x1="1116" y1="140" x2="1116" y2="143" stroke="#555"/><line x1="1112" y1="143.5" x2="1120" y2="143.5" stroke="#555"/>
<polygon points="1139,132 1146,132 1142.5,136" fill="#7a7d88"/>
<rect x="1662.5" y="123.5" width="17" height="21" fill="none" stroke="#9a9a9c" stroke-width="1.5"/><polygon points="1664,134 1668,130.5 1668,137.5" fill="#9a9a9c"/>
<rect x="1700.5" y="123.5" width="17" height="21" fill="none" stroke="#9a9a9c" stroke-width="1.5"/><polygon points="1716,134 1712,130.5 1712,137.5" fill="#9a9a9c"/>
<rect x="1739" y="141" width="16" height="3" fill="#9a9a9c"/>
<rect x="1775.5" y="131.5" width="14" height="11" fill="none" stroke="#9a9a9c" stroke-width="1.5"/><path d="M1780,131 V126.5 H1794.5 V138 H1790" fill="none" stroke="#9a9a9c" stroke-width="1.5"/>
<path d="M1815,126 L1831,142 M1831,126 L1815,142" stroke="#9a9a9c" stroke-width="1.8"/>
<rect x="-2" y="617.5" width="14" height="58" fill="#fdfdfd" stroke="#6a6a6a" stroke-width="1.2"/><circle cx="5" cy="646" r="4.5" fill="#d6d6d6" stroke="#777" stroke-width="1"/>
<g><polygon points="58,1101 70,1075 75,1077 64,1103" fill="#d42020"/><polygon points="76.5,1064.5 65,1073.5 67,1077 71,1075 74,1080 78,1078.5" fill="#8c1a1a"/><polygon points="21,1096 33.5,1091 33,1094.5 58,1097 60,1103 33.5,1101 34,1105" fill="#1f6a1f"/><polygon points="49,1086 53,1084 64,1100 59,1104" fill="#1c1cc8"/><path d="M43,1078 Q47,1077 53,1080 Q55,1083 53.5,1088 Q51,1091 46,1089.5 Q42,1087 42.5,1083Z" fill="#1818d0"/></g><path d="M73.2,1051 L82.7,1063.8 M82.7,1051 L73.2,1063.8" stroke="#ff1a1a" stroke-width="1.1" fill="none"/><path d="M38,1065.5 H44.8 L38.5,1077.5 H45" stroke="#1a1aff" stroke-width="1.1" fill="none"/><path d="M13,1088 L17.5,1094.5 L22,1088 M17.5,1094.5 V1101" stroke="#109a10" stroke-width="1.1" fill="none"/>
<line x1="1854" y1="116.5" x2="1910" y2="116.5" stroke="#999" stroke-width="1.5" stroke-dasharray="1.5 1.5"/>
<g><path d="M1862,132 H1882 V158" fill="none" stroke="#ddd" stroke-width="0.7"/><path d="M1866,132 V156 M1871,132 V156 M1876,132 V156 M1881,132 V156 M1862,137 H1886 M1862,142 H1886 M1862,147 H1886 M1862,152 H1886" stroke="#e0e0e0" stroke-width="0.7"/><path d="M1860.5,132 V150 Q1860.5,157 1868,157 H1886 M1860.5,132.5 H1880" fill="none" stroke="#2f6f9a" stroke-width="2"/></g><use href="#dd" x="1903" y="141" width="7" height="4.5"/>
<path d="M1874,171 L1887,183 M1874,171 L1860,185 L1872,197" fill="none" stroke="#2f6f9a" stroke-width="2"/><line x1="1863" y1="183" x2="1873" y2="173" stroke="#222" stroke-width="1.8"/><polygon points="1875,171 1869,172 1874,177" fill="#222"/><polygon points="1861,185 1867,184 1862,179" fill="#222"/><use href="#dd" x="1903" y="180" width="7" height="4.5"/>
<line x1="1855" y1="205.5" x2="1910" y2="205.5" stroke="#888" stroke-width="1"/>
<line x1="1860" y1="241" x2="1884" y2="216" stroke="#2f6f9a" stroke-width="2"/><rect x="1858" y="239" width="4" height="4" fill="#fff" stroke="#222" stroke-width="0.9"/><rect x="1882" y="214" width="4" height="4" fill="#fff" stroke="#222" stroke-width="0.9"/><use href="#dd" x="1903" y="225" width="7" height="4.5"/>
<rect x="1860" y="258" width="25" height="16" fill="none" stroke="#2f6f9a" stroke-width="2"/><rect x="1858" y="272" width="4" height="4" fill="#fff" stroke="#222" stroke-width="0.9"/><rect x="1883" y="256" width="4" height="4" fill="#fff" stroke="#222" stroke-width="0.9"/><use href="#dd" x="1903" y="264" width="7" height="4.5"/>
<rect x="1860" y="297" width="26" height="15" rx="7.5" fill="none" stroke="#2f6f9a" stroke-width="2"/><rect x="1866" y="302.5" width="4" height="4" fill="#fff" stroke="#222" stroke-width="0.9"/><rect x="1876" y="302.5" width="4" height="4" fill="#fff" stroke="#222" stroke-width="0.9"/><use href="#dd" x="1903" y="302" width="7" height="4.5"/>
<circle cx="1873" cy="343" r="12.5" fill="none" stroke="#2f6f9a" stroke-width="2"/><rect x="1871" y="341" width="4" height="4" fill="#fff" stroke="#222" stroke-width="0.9"/><rect x="1880" y="332" width="4" height="4" fill="#fff" stroke="#222" stroke-width="0.9"/><use href="#dd" x="1903" y="340" width="7" height="4.5"/>
<path d="M1863,370 A12,12 0 0 1 1885,378" fill="none" stroke="#2f6f9a" stroke-width="2"/><path d="M1885,378 A12,12 0 0 1 1862,386" fill="none" stroke="#ccc" stroke-width="1.2" stroke-dasharray="2 2"/><line x1="1863" y1="370" x2="1873" y2="380" stroke="#222" stroke-width="1.8"/><rect x="1861" y="368" width="4" height="4" fill="#fff" stroke="#222" stroke-width="0.9"/><rect x="1871" y="378" width="4" height="4" fill="#fff" stroke="#222" stroke-width="0.9"/><rect x="1883" y="375" width="4" height="4" fill="#fff" stroke="#222" stroke-width="0.9"/><use href="#dd" x="1903" y="378" width="7" height="4.5"/>
<path d="M1861,430 Q1864,406 1873,407 Q1878,408 1873,420 Q1868,432 1875,431 Q1884,430 1886,406" fill="none" stroke="#2f6f9a" stroke-width="2"/><use href="#dd" x="1903" y="416" width="7" height="4.5"/>
<ellipse cx="1873" cy="457" rx="13" ry="11" transform="rotate(-25 1873 457)" fill="none" stroke="#2f6f9a" stroke-width="2"/><rect x="1871" y="455" width="4" height="4" fill="#fff" stroke="#222" stroke-width="0.9"/><use href="#dd" x="1903" y="454" width="7" height="4.5"/>
<path d="M1860,483 H1878 Q1886,483 1886,492 V508" fill="none" stroke="#c8c8c8" stroke-width="2"/><use href="#ddg" x="1903" y="492" width="7" height="4.5"/>
<polygon points="1867,521 1880,521 1886,532 1880,543 1867,543 1861,532" fill="none" stroke="#2f6f9a" stroke-width="2"/><rect x="1871" y="530" width="4" height="4" fill="#fff" stroke="#222" stroke-width="0.9"/>
<rect x="1869" y="566" width="9" height="9" fill="#4d9fd2" stroke="#1f5c85" stroke-width="0.8"/>
<path d="M1865,598 L1883,596 L1882,614 L1865,618 Z" fill="#e6e6e6" stroke="#333" stroke-width="1" stroke-dasharray="2.5 1.5"/><path d="M1874,594 V623 M1862,608 L1886,604" stroke="#b89a90" stroke-width="0.8" stroke-dasharray="2 1.5"/>
<text x="1859.5" y="660" font-family="Liberation Serif" font-size="36" fill="#fafafa" stroke="#2f6f9a" stroke-width="1.3">A</text>
<path d="M1860,671 L1885,690 M1860,690 L1885,671 M1872,668 V697 M1860,692 H1886" stroke="#c8c8c8" stroke-width="1.6" fill="none"/><circle cx="1862" cy="675" r="3" fill="none" stroke="#c8c8c8" stroke-width="1.5"/><circle cx="1862" cy="687" r="3" fill="none" stroke="#c8c8c8" stroke-width="1.5"/><use href="#ddg" x="1903" y="682" width="7" height="4.5"/>
<g stroke="#333" stroke-width="1" stroke-linejoin="round"><polygon points="1861,714 1873,709 1885,714 1873,719" fill="#fafafa"/><polygon points="1861,714 1873,719 1873,735 1861,730" fill="#f0f0f0"/><polygon points="1873,719 1885,714 1885,730 1873,735" fill="#dcdcdc"/></g><line x1="1873" y1="720" x2="1873" y2="734" stroke="#3a88ba" stroke-width="2"/><use href="#dd" x="1903" y="720" width="7" height="4.5"/>
<path d="M1860,748 V764 Q1860,773 1869,773 H1886 M1865,748 V762 Q1865,768 1871,768 H1886" fill="none" stroke="#c8c8c8" stroke-width="1.8"/>
<path d="M1860,792 H1867 V796 H1870 V803 H1867 V807 H1860 M1886,792 H1879 V796 H1876 V803 H1879 V807 H1886 M1873,786 V812" fill="none" stroke="#c8c8c8" stroke-width="1.6"/>
<path d="M1861,824 H1869 V829 H1866 V834 H1861Z M1876,824 H1884 V829 H1881 V834 H1876Z M1861,840 H1869 V845 H1866 V850 H1861Z M1876,840 H1884 V845 H1881 V850 H1876Z" fill="none" stroke="#c8c8c8" stroke-width="1.6"/><use href="#ddg" x="1903" y="835" width="7" height="4.5"/>
<path d="M1862,882 L1872,872 M1866,872 H1872 V878" fill="none" stroke="#c8c8c8" stroke-width="1.6"/><rect x="1876" y="864" width="9" height="9" fill="none" stroke="#c8c8c8" stroke-width="1.4"/><rect x="1861" y="880" width="8" height="8" fill="none" stroke="#ddd" stroke-width="1" stroke-dasharray="1.5 1.5"/><use href="#ddg" x="1903" y="872" width="7" height="4.5"/>
<path d="M1864,899 V922 M1860,922 H1880" fill="none" stroke="#c8c8c8" stroke-width="1.6"/><path d="M1874,919 Q1880,913 1886,919 Q1880,925 1874,919Z" fill="#c8c8c8"/><use href="#ddg" x="1903" y="910" width="7" height="4.5"/>
<path d="M1861,936 H1884 V949 Q1884,962 1871,962 H1861Z" fill="none" stroke="#c8c8c8" stroke-width="1.5"/><path d="M1868,957 L1879,945 M1877,943 A3,3 0 1 0 1881,947 M1866,955 A3,3 0 1 0 1870,959" fill="none" stroke="#c8c8c8" stroke-width="1.5"/>
<path d="M1860.5,978 V1004 M1860,977.5 H1886" fill="none" stroke="#2f6f9a" stroke-width="2"/><circle cx="1873" cy="990" r="10.5" fill="none" stroke="#222" stroke-width="1.8"/><circle cx="1873" cy="990" r="2.8" fill="#4d9fd2" stroke="#1f5c85" stroke-width="0.7"/><use href="#dd" x="1903" y="987" width="7" height="4.5"/>
<path d="M1860.5,1015 V1032 Q1860.5,1039 1868,1039 H1886" fill="none" stroke="#2f6f9a" stroke-width="2"/><path d="M1864,1016 H1886 V1036" fill="none" stroke="#ddd" stroke-width="0.7"/><polygon points="1878,1013 1871,1024 1876,1024 1872,1032 1881,1021 1876,1021 1880,1013" fill="#f5a623" stroke="#b06a00" stroke-width="0.5"/>
<rect x="1854.5" y="1046.5" width="37" height="36" fill="#b5b5b5" stroke="#7a7a7a" stroke-width="1"/><path d="M1860.5,1053 V1068 Q1860.5,1075 1868,1075 H1886" fill="none" stroke="#2f6f9a" stroke-width="2"/><path d="M1864,1054 H1881 Q1884,1054 1884,1057 V1060" fill="none" stroke="#2f6f9a" stroke-width="1.6"/><polygon points="1867,1061 1881,1068 1884,1064 1870,1057" fill="#f0d040" stroke="#333" stroke-width="0.8"/><polygon points="1870,1068 1882,1073 1877,1066" fill="#2f74a3"/>
<line x1="1852" y1="1090.5" x2="1910" y2="1090.5" stroke="#777" stroke-width="1"/>
<rect x="0" y="1181" width="1513" height="22" fill="#abb3bd"/>
<rect x="1517" y="1181" width="4" height="22" fill="#abb3bd"/>
<rect x="1525" y="1181" width="4" height="22" fill="#abb3bd"/>
<rect x="1533" y="1181" width="4" height="22" fill="#abb3bd"/>
<rect x="1637" y="1181" width="4" height="22" fill="#abb3bd"/>
<rect x="1693" y="1181" width="4" height="22" fill="#abb3bd"/>
<rect x="1701" y="1181" width="4" height="22" fill="#abb3bd"/>
<rect x="1711" y="1181" width="4" height="22" fill="#abb3bd"/>
<rect x="1719" y="1181" width="4" height="22" fill="#abb3bd"/>
<rect x="1727" y="1181" width="4" height="22" fill="#abb3bd"/>
<rect x="1541" y="1181" width="92" height="22" fill="#abb3bd"/>
<rect x="1644" y="1180" width="4.5" height="23" fill="#8b939c"/><rect x="1644.5" y="1180" width="1.5" height="23" fill="#6c7178"/>
<rect x="1653" y="1181" width="36" height="22" fill="#abb3bd"/>
<rect x="1740" y="1181" width="126" height="22" fill="#abb3bd"/>
<rect x="1870" y="1181" width="8" height="22" fill="#abb3bd"/><rect x="1878" y="1181" width="32" height="22" fill="#abb3bd"/><rect x="0" y="1203" width="1910" height="5" fill="#d9dfe6"/>
<text x="1541.5" y="1198.3" font-family="Liberation Sans" font-size="16.5" fill="#101010">Editing Part</text>
<text x="1783" y="1198" font-family="Liberation Sans" font-size="15" fill="#101010">IPS</text>
<polygon points="1846,1194 1853,1194 1849.5,1190" fill="#333"/>
<g><rect x="1659" y="1196" width="4" height="7" fill="#2a6a95"/><rect x="1665" y="1192" width="4" height="11" fill="#2a6a95"/><rect x="1671" y="1188" width="4" height="15" fill="#2a6a95"/><rect x="1677" y="1185" width="4" height="18" fill="#2a6a95"/><path d="M1657,1201 Q1674,1199 1679,1186 L1675,1186 L1684,1180 L1687.5,1189 L1683.5,1187.5 Q1679,1203 1660,1204Z" fill="#2a2a2a"/><polygon points="1657.5,1195.5 1665.5,1181.5 1673.5,1195.5" fill="#f8d210" stroke="#b07000" stroke-width="1" stroke-linejoin="round"/><rect x="1664.5" y="1185.5" width="2" height="5.5" fill="#111"/><rect x="1664.5" y="1192" width="2" height="2" fill="#111"/></g>
<g transform="translate(1898,1191) rotate(33)"><path d="M-14,-6 L-10,-9 H12 V7 H-10 L-14,3Z" fill="#f4f4f4" stroke="#333" stroke-width="1.1"/><path d="M-2,-5 V4 M2.5,-5 V4 M7,-5 V4" stroke="#333" stroke-width="1.4"/><circle cx="-8" cy="-3" r="2.2" fill="#999" stroke="#333" stroke-width="0.8"/></g>
</svg>
</body></html>
